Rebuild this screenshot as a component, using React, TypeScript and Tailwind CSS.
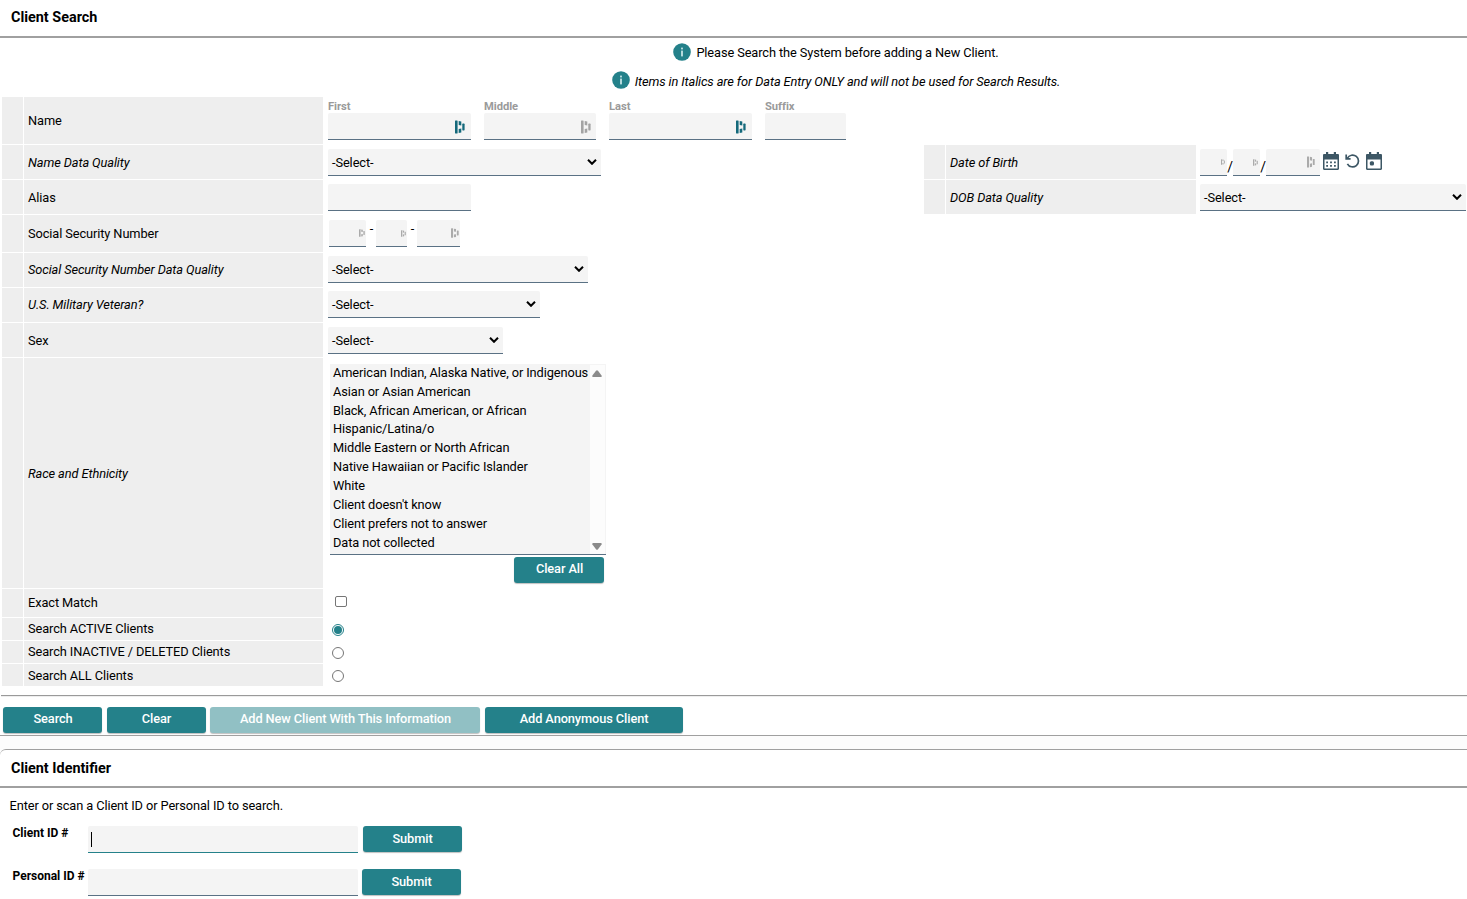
import { ReactNode } from "react";

const races = [
  "American Indian, Alaska Native, or Indigenous",
  "Asian or Asian American",
  "Black, African American, or African",
  "Hispanic/Latina/o",
  "Middle Eastern or North African",
  "Native Hawaiian or Pacific Islander",
  "White",
  "Client doesn't know",
  "Client prefers not to answer",
  "Data not collected",
];

function InfoIcon() {
  return (
    <svg className="h-[18px] w-[18px] shrink-0" viewBox="0 0 18 18">
      <circle cx="9" cy="9" r="8.8" fill="#24818a" />
      <rect x="8.2" y="4.6" width="1.6" height="1.8" fill="#d9f0f1" />
      <rect x="8.2" y="7.6" width="1.6" height="5.8" fill="#d9f0f1" />
    </svg>
  );
}

// password manager mark shown at the end of an input
function FillMark({ className }: { className: string }) {
  return (
    <svg className={className} viewBox="0 0 10 14" fill="currentColor" preserveAspectRatio="none">
      <rect x="0" y="0.5" width="2.6" height="13" rx="0.4" />
      <path d="M3.7 .9l2.6.5v4l-2.600-.5zM3.7 9.100l2.600-.5v4l-2.600.5z" />
      <rect x="7.3" y="3.600" width="2.300" height="6.800" rx="0.6" />
    </svg>
  );
}

function Field({ className, children }: { className: string; children?: ReactNode }) {
  return (
    <div className={`flex h-[27px] shrink-0 items-center justify-end rounded-t-xs border-b border-[#5a7184] bg-[#f4f4f4] ${className}`}>
      {children}
    </div>
  );
}

function Select({ className }: { className: string }) {
  return (
    <div className={`flex h-[27px] shrink-0 items-center justify-between rounded-t-xs border-b border-[#5a7184] bg-[#f4f4f4] pl-1 pr-1 ${className}`}>
      <span className="pt-[2px]">-Select-</span>
      <svg className="h-[6px] w-[10px]" viewBox="0 0 10 6" fill="none" stroke="#000" strokeWidth="2">
        <path d="M1 .8l4 4 4-4" />
      </svg>
    </div>
  );
}

function Label({ className, italic, children }: { className: string; italic?: boolean; children: ReactNode }) {
  return (
    <div className="flex shrink-0 gap-px">
      <div className="w-[21px] bg-[#eee]" />
      <div className={`flex items-center bg-[#eee] pl-1 ${italic ? "italic" : ""} ${className}`}>{children}</div>
    </div>
  );
}

function Row({ className, label, italic, low, children }: { className: string; label: string; italic?: boolean; low?: boolean; children?: ReactNode }) {
  return (
    <div className={`flex ${className}`}>
      <Label className={low ? "w-[299px] pt-[2px]" : "w-[299px]"} italic={italic}>{label}</Label>
      {children}
    </div>
  );
}

function Button({ className, children }: { className: string; children: ReactNode }) {
  return (
    <button className={`flex h-[26px] shrink-0 items-center justify-center rounded-[3px] font-medium text-white shadow-[0_1px_1px_rgba(0,0,0,0.25)] ${className}`}>
      {children}
    </button>
  );
}

function NameField({ label, className, children }: { label: string; className: string; children?: ReactNode }) {
  return (
    <div className="shrink-0">
      <div className="h-4 pt-[2px] text-[11.2px] leading-4 font-bold tracking-[-0.05px] text-[#9a9a9a]">{label}</div>
      <Field className={className}>{children}</Field>
    </div>
  );
}

export default function App() {
  return (
    <main className="h-[899px] w-[1467px] overflow-hidden bg-white font-['Roboto',sans-serif] text-[12.8px] leading-4 tracking-[-0.1px] text-black">
      <h1 className="h-[38px] rounded-tl-md border-b-2 border-[#a0a0a0] pt-[9px] pl-[11px] text-[14.4px] leading-[18px] font-bold tracking-normal">Client Search</h1>
      <div className="flex h-[30px] items-center justify-center gap-[5px] pl-[205px]">
        <div className="pb-[2px]"><InfoIcon /></div>
        <span>Please Search the System before adding a New Client.</span>
      </div>
      <div className="flex h-[29px] items-start justify-center gap-[5px] pt-[3px] pl-[205px] italic">
        <InfoIcon />
        <span className="pt-[3px]">Items in Italics are for Data Entry ONLY and will not be used for Search Results.</span>
      </div>

      <section className="flex h-[598px] flex-col gap-px pl-[2px]">
        <Row className="h-[47px]" label="Name">
          <div className="flex gap-[13px] pl-[5px]">
            <NameField label="First" className="w-[143px] pt-[2px] pr-[6px]"><FillMark className="h-[14px] w-[10px] text-[#14697b]" /></NameField>
            <NameField label="Middle" className="w-[112px] pt-[2px] pr-[5px]"><FillMark className="h-[14px] w-[10px] text-[#a3a3a3]" /></NameField>
            <NameField label="Last" className="w-[143px] pt-[2px] pr-[6px]"><FillMark className="h-[14px] w-[10px] text-[#14697b]" /></NameField>
            <NameField label="Suffix" className="w-[81px]" />
          </div>
        </Row>
        <Row className="h-[34px]" label="Name Data Quality" italic low>
          <div className="w-[601px] pt-1 pl-[5px]"><Select className="w-[273px]" /></div>
          <Label className="w-[250px] pt-[2px]" italic>Date of Birth</Label>
          <div className="flex pt-1 pl-1">
            <Field className="w-[27px] pr-[2px]"><FillMark className="h-[6px] w-[4px] text-[#aaa]" /></Field>
            <span className="w-[6px] pt-[10px] text-center text-[14px]">/</span>
            <Field className="w-[27px] pr-[2px]"><FillMark className="h-[7px] w-[5px] text-[#aaa]" /></Field>
            <span className="w-[6px] pt-[10px] text-center text-[14px]">/</span>
            <Field className="w-[54px] pr-[5px]"><FillMark className="h-[12px] w-[8px] text-[#aaa]" /></Field>
            <svg className="mt-[3px] ml-[3px] h-[18px] w-4" viewBox="0 0 16 18" fill="#3d5765">
              <path d="M3 0h2.2v2h5.6V0H13v2h1.8c.7 0 1.2.5 1.2 1.2v13.6c0 .7-.5 1.2-1.2 1.2H1.2C.5 18 0 17.500 0 16.800V3.200C0 2.500.5 2 1.200 2H3zM1.500 7.500v9h13v-9z" fillRule="evenodd" />
              <path d="M3.200 9.500h1.800v1.700h-1.800zM7.100 9.500h1.800v1.700H7.100zM11 9.500h1.800v1.700H11zM3.200 13h1.800v1.700h-1.800zM7.100 13h1.800v1.700H7.100zM11 13h1.800v1.700H11z" />
            </svg>
            <svg className="mt-[5px] ml-[6px] h-[14px] w-[15px]" viewBox="0 0 15 14" fill="none" stroke="#3d5765" strokeWidth="1.7">
              <path d="M2.400 4.200A5.900 5.900 0 112.400 9.800" />
              <path d="M1.200.4v4.400h4.400" />
            </svg>
            <svg className="mt-[3px] ml-[6px] h-[18px] w-4" viewBox="0 0 16 18" fill="#3d5765">
              <path d="M3 0h2.2v2h5.6V0H13v2h1.8c.7 0 1.2.5 1.2 1.2v13.6c0 .7-.5 1.2-1.2 1.2H1.2C.5 18 0 17.500 0 16.800V3.200C0 2.500.5 2 1.200 2H3zM1.500 7.500v9h13v-9z" fillRule="evenodd" />
              <rect x="3.800" y="9.300" width="4.200" height="4.200" rx="1.500" />
            </svg>
          </div>
        </Row>
        <Row className="h-[34px]" label="Alias" low>
          <div className="w-[601px] pt-1 pl-[5px]"><Field className="w-[143px]" /></div>
          <Label className="w-[250px] pt-[2px]" italic>DOB Data Quality</Label>
          <div className="pt-1 pl-1"><Select className="w-[266px]" /></div>
        </Row>
        <Row className="h-[37px]" label="Social Security Number">
          <div className="flex pt-[5px] pl-[6px]">
            <Field className="w-[37px] pr-[1px]"><FillMark className="h-[8px] w-[6px] text-[#aaa]" /></Field>
            <span className="w-[10px] pt-px pl-px text-center">-</span>
            <Field className="w-[31px] pr-[1px]"><FillMark className="h-[7px] w-[5px] text-[#aaa]" /></Field>
            <span className="w-[10px] pt-px pl-px text-center">-</span>
            <Field className="w-[43px] pr-[1px]"><FillMark className="h-[10px] w-[8px] text-[#aaa]" /></Field>
          </div>
        </Row>
        <Row className="h-[34px]" label="Social Security Number Data Quality" italic>
          <div className="pt-[3px] pl-[5px]"><Select className="w-[260px]" /></div>
        </Row>
        <Row className="h-[34px]" label="U.S. Military Veteran?" italic>
          <div className="pt-[3px] pl-[5px]"><Select className="w-[212px]" /></div>
        </Row>
        <Row className="h-[34px]" label="Sex" low>
          <div className="pt-1 pl-[5px]"><Select className="w-[175px]" /></div>
        </Row>
        <Row className="h-[230px]" label="Race and Ethnicity" italic low>
          <div className="flex w-[282.5px] flex-col items-end pt-[6px]">
            <div className="flex h-[191px] w-[275.5px] border-b border-[#5a7184] bg-[#f4f4f4]">
              <ul className="-mt-[0.25px] w-[260px] pl-[3px] whitespace-nowrap">
                {races.map((race) => (
                  <li key={race} className="h-[18.9px] leading-[18px]">{race}</li>
                ))}
              </ul>
              <div className="mt-px flex w-[14.5px] flex-col items-center justify-between bg-[#fcfcfc] pt-[5px] pb-[4px]">
                <svg className="h-[7px] w-[10px]" viewBox="0 0 10 7" fill="#8b8b8b"><path d="M4 .8Q5-.5 6 .8L9.6 5.5Q10 7 8.8 7H1.2Q0 7 .4 5.5z" /></svg>
                <svg className="h-[7px] w-[10px] rotate-180" viewBox="0 0 10 7" fill="#8b8b8b"><path d="M4 .8Q5-.5 6 .8L9.6 5.5Q10 7 8.8 7H1.2Q0 7 .4 5.5z" /></svg>
              </div>
            </div>
            <div className="pt-[2px] pr-[1.5px]"><Button className="w-[90px] bg-[#24818a] pb-[3px] pl-px">Clear All</Button></div>
          </div>
        </Row>
        <Row className="h-[28px]" label="Exact Match">
          <div className="pt-[7px] pl-[12px]"><div className="h-[11px] w-[12px] rounded-[2px] border border-[#767676]" /></div>
        </Row>
        <Row className="h-[22px]" label="Search ACTIVE Clients">
          <div className="pt-[6px] pl-[9px]">
            <div className="flex h-3 w-3 items-center justify-center rounded-full border border-[#24818a]"><div className="h-[7.5px] w-[7.5px] rounded-full bg-[#24818a]" /></div>
          </div>
        </Row>
        <Row className="h-[22px]" label="Search INACTIVE / DELETED Clients">
          <div className="pt-[6px] pl-[9px]"><div className="h-3 w-3 rounded-full border border-[#767676]" /></div>
        </Row>
        <Row className="h-[22px]" label="Search ALL Clients" low>
          <div className="pt-[6px] pl-[9px]"><div className="h-3 w-3 rounded-full border border-[#767676]" /></div>
        </Row>
      </section>

      <div className="ml-px h-[2px] border-t border-b border-t-[#9a9a9a] border-b-[#eee]" />
      <div className="flex h-[39px] border-b border-[#a0a0a0] pt-[10px] pl-[3px]">
        <Button className="mr-[5px] w-[99px] bg-[#24818a] pb-[3px] pl-px">Search</Button>
        <Button className="mr-[4px] w-[99px] bg-[#24818a] pb-[3px]">Clear</Button>
        <Button className="mr-[5px] w-[270px] bg-[#91c0c4] pb-[3px] pl-px">Add New Client With This Information</Button>
        <Button className="w-[198px] bg-[#24818a] pb-[3px]">Add Anonymous Client</Button>
      </div>
      <div className="bg-[#fcfcfc] pt-[13px]">
        <h2 className="h-[39px] rounded-tl-md border-t border-b-2 border-[#a0a0a0] bg-white pt-[10px] pl-[11px] text-[14.4px] leading-[18px] font-bold tracking-normal">Client Identifier</h2>
      </div>
      <p className="pt-[10px] pl-[9.5px]">Enter or scan a Client ID or Personal ID to search.</p>
      <div className="flex pt-[12px] pl-[12.5px]">
        <span className="w-[75.5px] text-[12px] leading-[14px] font-bold tracking-normal">Client ID #</span>
        <div className="flex h-[27px] w-[270px] items-center rounded-t-xs border-b border-[#24818a] bg-[#f4f4f4] pl-[3px]">
          <div className="h-[15px] w-px bg-black" />
        </div>
        <Button className="ml-[5px] w-[99px] bg-[#24818a] pb-[1px]">Submit</Button>
      </div>
      <div className="flex pt-[16px] pl-[12.5px]">
        <span className="w-[75.5px] text-[12px] leading-[14px] font-bold tracking-normal whitespace-nowrap">Personal ID #</span>
        <Field className="w-[270px]" />
        <Button className="ml-[4px] w-[99px] bg-[#24818a] pb-[1px]">Submit</Button>
      </div>
    </main>
  );
}
